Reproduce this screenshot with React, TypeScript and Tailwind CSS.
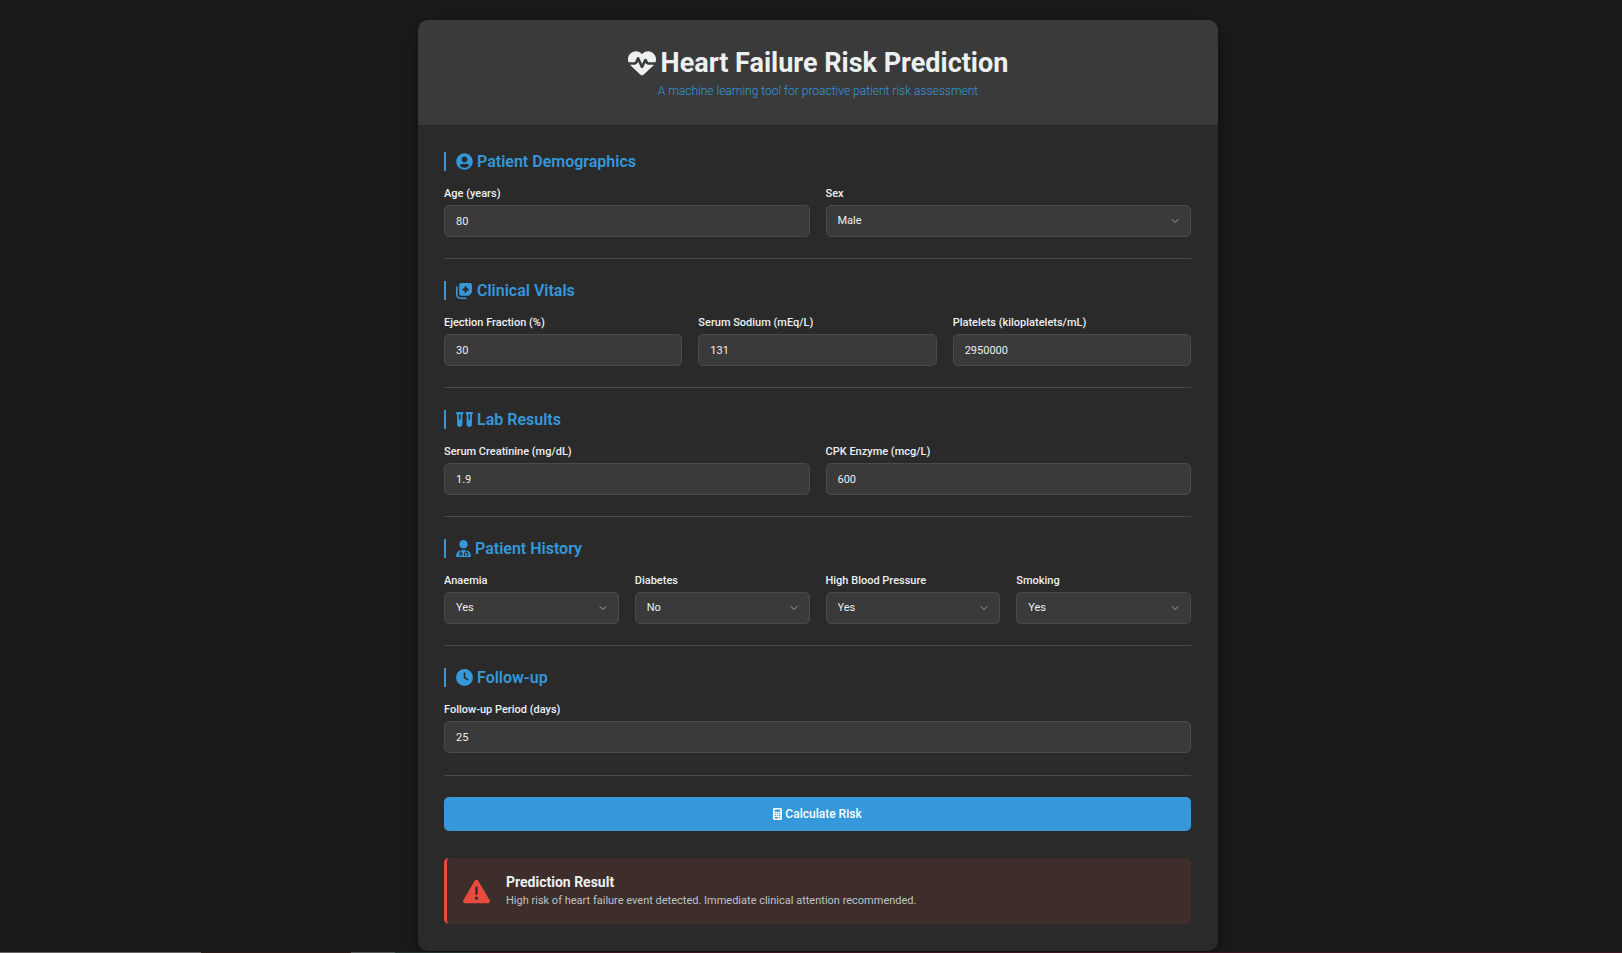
import type { ReactNode } from "react";
import { FaUserCircle } from "react-icons/fa";
import {
  FaCalculator,
  FaClock,
  FaHeartPulse,
  FaNotesMedical,
  FaTriangleExclamation,
  FaUserDoctor,
  FaVials,
} from "react-icons/fa6";
import { ChevronDown } from "lucide-react";

const control =
  "block h-8 w-full appearance-none rounded-[5px] border border-[#4a4a4a] bg-[#3a3a3a] px-[11px] text-[11px] leading-4 text-[#ecf0f1] outline-none focus:border-[#3498db]";

function Label({ htmlFor, children }: { htmlFor: string; children: ReactNode }) {
  return (
    <label htmlFor={htmlFor} className="mb-[3px] block text-[11px] leading-4 font-medium text-[#ecf0f1]">
      {children}
    </label>
  );
}

function TextField({ id, label, value }: { id: string; label: string; value: string }) {
  return (
    <div>
      <Label htmlFor={id}>{label}</Label>
      <input id={id} type="text" inputMode="decimal" defaultValue={value} className={control} />
    </div>
  );
}

function SelectField({ id, label, value, options }: { id: string; label: string; value: string; options: string[] }) {
  return (
    <div>
      <Label htmlFor={id}>{label}</Label>
      <div className="relative">
        <select id={id} defaultValue={value} className={control}>
          {options.map((option) => (
            <option key={option}>{option}</option>
          ))}
        </select>
        <ChevronDown size={12} strokeWidth={2} className="pointer-events-none absolute top-[10px] right-[10px] text-[#a0a0a0]" />
      </div>
    </div>
  );
}

function Section({ icon, title, columns, children }: { icon: ReactNode; title: string; columns: string; children: ReactNode }) {
  return (
    <section className="mb-[22px] border-b border-[#4a4a4a] pb-[21px] last-of-type:mb-[21px] last-of-type:pb-[22px]">
      <h2 className="mb-[15px] flex items-center gap-1 border-l-2 border-[#3498db] pl-[10px] text-[16px] leading-[19px] font-semibold text-[#3498db]">
        {icon}
        {title}
      </h2>
      <div className={`grid gap-4 ${columns}`}>{children}</div>
    </section>
  );
}

const yesNo = ["Yes", "No"];

export default function App() {
  return (
    <div className="flex min-h-screen flex-col bg-[#1a1a1a] font-[Roboto,sans-serif]">
      <div className="pt-5 pl-[14px]">
        <main className="mx-auto w-full max-w-[800px] overflow-hidden rounded-[10px] bg-[#2a2a2a] shadow-[0_7px_20px_rgba(0,0,0,0.4)]">
          <header className="bg-[#3a3a3a] px-[26px] pt-[27px] pb-[26px] text-center">
            <h1 className="flex items-center justify-center gap-[5px] text-[27px] leading-8 font-bold text-[#ecf0f1]">
              <FaHeartPulse size={28} />
              Heart Failure Risk Prediction
            </h1>
            <p className="mt-1 text-[12px] leading-4 font-light text-[#3498db]">
              A machine learning tool for proactive patient risk assessment
            </p>
          </header>

          <form className="py-[27px] pr-[27px] pl-[26px]" onSubmit={(event) => event.preventDefault()}>
            <Section icon={<FaUserCircle size={17} />} title="Patient Demographics" columns="grid-cols-2">
              <TextField id="age" label="Age (years)" value="80" />
              <SelectField id="sex" label="Sex" value="Male" options={["Male", "Female"]} />
            </Section>
            <Section icon={<FaNotesMedical size={17} />} title="Clinical Vitals" columns="grid-cols-3">
              <TextField id="ejection" label="Ejection Fraction (%)" value="30" />
              <TextField id="sodium" label="Serum Sodium (mEq/L)" value="131" />
              <TextField id="platelets" label="Platelets (kiloplatelets/mL)" value="2950000" />
            </Section>
            <Section icon={<FaVials size={17} />} title="Lab Results" columns="grid-cols-2">
              <TextField id="creatinine" label="Serum Creatinine (mg/dL)" value="1.9" />
              <TextField id="cpk" label="CPK Enzyme (mcg/L)" value="600" />
            </Section>
            <Section icon={<FaUserDoctor className="h-[17px] w-[15px]" />} title="Patient History" columns="grid-cols-4">
              <SelectField id="anaemia" label="Anaemia" value="Yes" options={yesNo} />
              <SelectField id="diabetes" label="Diabetes" value="No" options={yesNo} />
              <SelectField id="pressure" label="High Blood Pressure" value="Yes" options={yesNo} />
              <SelectField id="smoking" label="Smoking" value="Yes" options={yesNo} />
            </Section>
            <Section icon={<FaClock size={17} />} title="Follow-up" columns="grid-cols-1">
              <TextField id="followup" label="Follow-up Period (days)" value="25" />
            </Section>

            <button
              type="submit"
              className="flex h-[34px] w-full items-center justify-center gap-[3px] rounded-[5px] bg-[#3498db] text-[12px] leading-4 font-medium text-white"
            >
              <FaCalculator className="h-3 w-[9px]" />
              Calculate Risk
            </button>

            <div
              role="alert"
              className="mt-[27px] flex h-[66px] items-center gap-4 rounded-[5px] border-l-[3px] border-[#e74c3c] bg-[#3d2d2b] px-4"
            >
              <FaTriangleExclamation size={27} className="text-[#e74c3c]" />
              <div>
                <h3 className="text-[14px] leading-5 font-bold text-[#ecf0f1]">Prediction Result</h3>
                <p className="text-[11px] leading-[18px] text-[#bdc3c7]">
                  High risk of heart failure event detected. Immediate clinical attention recommended.
                </p>
              </div>
            </div>
          </form>
        </main>
      </div>
      <div aria-hidden="true" className="mt-auto flex h-px">
        <div className="w-[201px] bg-[#6a6365]" />
        <div className="w-[150px] bg-[#2a1a18]" />
        <div className="w-[44px] bg-[#585858]" />
        <div className="w-[85px] bg-[#28332f]" />
        <div className="flex-1 bg-[#3c1620]" />
      </div>
    </div>
  );
}
